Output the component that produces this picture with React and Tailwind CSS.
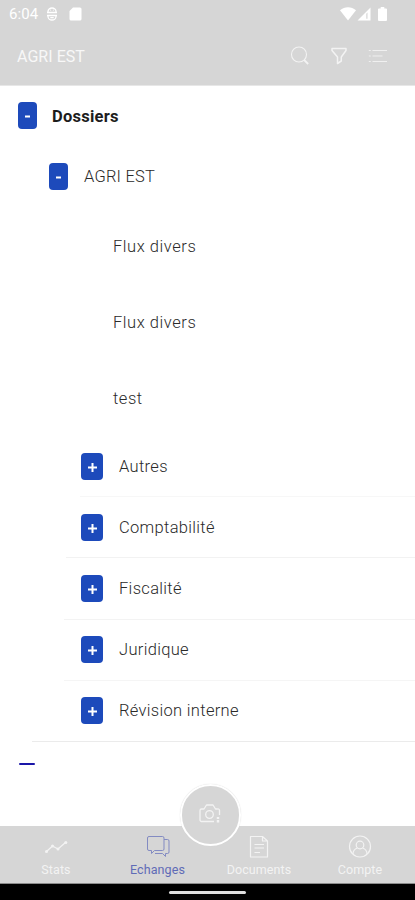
import React from "react";
import { clsx } from "clsx";

const leaves = ["Flux divers", "Flux divers", "test"];

const folders = [
  { name: "Autres", line: "ml-[80px] bg-[#f7f7f7]" },
  { name: "Comptabilité", line: "ml-[66px] bg-[#f2f2f2]" },
  { name: "Fiscalité", line: "ml-[64px] bg-[#f3f3f3]" },
  { name: "Juridique", line: "ml-[64px] bg-[#f5f5f5]" },
  { name: "Révision interne", line: "ml-[32px] bg-[#ebebeb]" },
];

function StatusBar() {
  return (
    <div className="flex h-7 items-center pl-[9px] pr-[28px] text-white">
      <span className="w-[30px] text-[15px] leading-none tracking-[0.1px]">6:04</span>
      <svg className="ml-[7px] h-[14px] w-[12px]" viewBox="0 0 12 14" fill="none" stroke="currentColor" strokeWidth="1.3">
        <path d="M2 5.5V4.5a4 3.5 0 0 1 8 0v1M2 8.5v1a4 3.5 0 0 0 8 0v-1M1 5.5h10M1 8.5h10" />
        <path d="M4.3 3.2h.8M6.9 3.2h.8M4.3 10.7h3.4" />
      </svg>
      <svg className="ml-[11px] h-[14px] w-[13px]" viewBox="0 0 13 14" fill="currentColor">
        <path d="M4 .5h7a1.5 1.5 0 0 1 1.5 1.5v10a1.5 1.5 0 0 1-1.5 1.5H2A1.5 1.5 0 0 1 .5 12V4z" />
      </svg>
      <svg className="ml-auto h-[14px] w-[16px]" viewBox="0 0 16 14" fill="currentColor">
        <path d="M0 3.2C4.7 -.9 11.3 -.9 16 3.2L8 13.5z" />
      </svg>
      <svg className="ml-[1px] h-[14px] w-[14px]" viewBox="0 0 14 14" fill="currentColor">
        <path fillRule="evenodd" d="M13.5 .5v13H.5zM9.3 6.8v5h1.2v-6.2z" />
      </svg>
      <svg className="ml-[7px] h-[14px] w-[9px]" viewBox="0 0 9 15" preserveAspectRatio="none" fill="currentColor">
        <path d="M2.7 0h3.6v1.5H8a1 1 0 0 1 1 1V14a1 1 0 0 1-1 1H1a1 1 0 0 1-1-1V2.5a1 1 0 0 1 1-1h1.7z" />
      </svg>
    </div>
  );
}

function Header() {
  return (
    <header className="h-[86px] shrink-0 border-b border-[#e7e7e7] bg-[#d6d6d6] text-white">
      <StatusBar />
      <div className="flex h-[56px] items-center pl-[17px] pr-[27px]">
        <h1 className="pt-px text-[16px] tracking-[0.05px] text-[#f8f8f8]">AGRI EST</h1>
        <div className="ml-auto flex items-center text-[#f3f3f3]">
          <svg className="h-5 w-5" viewBox="0 0 20 20" fill="none" stroke="currentColor" strokeWidth="1.1">
            <circle cx="9" cy="8.5" r="7.5" />
            <path d="m14.2 14 4 4" strokeWidth="1.8" />
          </svg>
          <svg className="ml-[21px] h-[18px] w-[16px]" viewBox="0 0 16 18" fill="none" stroke="currentColor" strokeWidth="1.5" strokeLinejoin="round">
            <path d="M1 1.5h14v2L10.300 10v4L6.500 16.500V10L1 3.500z" />
          </svg>
          <svg className="ml-[21px] h-4 w-[20px]" viewBox="0 0 20 16" fill="none" stroke="currentColor" strokeWidth="0.9">
            <path d="M4.5 2.500h14.500M4.500 8h10M4.500 13.500h14.500M.8 2.500h2M.8 8h2M.8 13.500h2" />
          </svg>
        </div>
      </div>
    </header>
  );
}

function Toggle({ open }) {
  return (
    <span
      className={clsx(
        "flex h-[27px] shrink-0 items-center justify-center rounded-[4px] bg-[#1d4abb] text-white",
        open ? "w-[19px]" : "w-[22px]"
      )}
    >
      <svg className="mt-0.5 h-[9px] w-[9px]" viewBox="0 0 9 9" fill="none" stroke="currentColor" strokeWidth="2">
        <path d={open ? "M2 4.5h5" : "M0 4.5h9M4.5 0v9"} />
      </svg>
    </span>
  );
}

function FolderTree() {
  return (
    <main className="flex min-h-0 flex-1 flex-col overflow-hidden text-[16.5px] text-[#2a2a2a]">
      <div className="flex h-[59px] shrink-0 items-center pl-[18px]">
        <Toggle open />
        <span className="ml-[15px] pt-[3px] font-bold tracking-[0.25px] text-[#1d1d1d]">Dossiers</span>
      </div>
      <div className="flex h-[63px] shrink-0 items-center pl-[49px]">
        <Toggle open />
        <span className="ml-[16px] pt-0.5 font-light tracking-[0.2px]">AGRI EST</span>
      </div>
      {leaves.map((leaf, i) => (
        <div key={i} className="flex h-[76px] shrink-0 items-center pl-[113px] pt-0.5 font-light tracking-[0.55px]">
          {leaf}
        </div>
      ))}
      {folders.map((folder) => (
        <div key={folder.name} className="flex h-[61.2px] shrink-0 flex-col">
          <div className="flex flex-1 items-center pl-[81px]">
            <Toggle />
            <span className="ml-[16px] pt-0.5 font-light tracking-[0.32px]">{folder.name}</span>
          </div>
          <div className={clsx("h-px", folder.line)} />
        </div>
      ))}
      <div className="ml-[19px] mt-[21px] h-0.5 w-[16px] shrink-0 rounded-full bg-[#1a16a8]" />
    </main>
  );
}

function StatsIcon() {
  return (
    <svg className="h-6 w-6" viewBox="0 0 24 24" fill="none" stroke="currentColor" strokeWidth="1.3">
      <path d="m2.5 17.500 6-5.500 5.500 3 7.500-6.500" />
      <g fill="currentColor" stroke="none">
        <circle cx="2.5" cy="17.5" r="1.5" />
        <circle cx="8.5" cy="12" r="1.5" />
        <circle cx="14" cy="15" r="1.5" />
        <circle cx="21.8" cy="8.5" r="1.5" />
      </g>
    </svg>
  );
}

function ChatIcon() {
  return (
    <svg className="h-6 w-6" viewBox="0 0 24 24" fill="none" stroke="currentColor" strokeWidth="1" strokeLinejoin="round">
      <path d="M3 2.500h13.500a1.500 1.500 0 0 1 1.500 1.500v11a1.500 1.500 0 0 1-1.500 1.500H8.500l-3 3v-3H3A1.500 1.500 0 0 1 1.500 15V4A1.500 1.500 0 0 1 3 2.500z" />
      <path d="M18 5.500h3.500A1.500 1.500 0 0 1 23 7v11a1.500 1.500 0 0 1-1.500 1.500h-2v3l-3-3h-7.500" />
    </svg>
  );
}

function DocumentIcon() {
  return (
    <svg className="h-6 w-6" viewBox="0 0 24 24" fill="none" stroke="currentColor" strokeWidth="1.2" strokeLinejoin="round">
      <path d="M4 2.500h11.500l5 4.500v16h-17V2.500zM15.500 2.500V7h5M7.500 10.500h9.500M7.500 14h9.500M7.500 18.500h5.500" />
    </svg>
  );
}

function AccountIcon() {
  return (
    <svg className="h-6 w-6" viewBox="0 0 24 24" fill="none" stroke="currentColor" strokeWidth="1.2">
      <circle cx="12" cy="12.5" r="10.5" />
      <circle cx="12" cy="11" r="3.8" />
      <path d="M5 20c0-3 1.500-5 4.500-6M19 20c0-3-1.500-5-4.500-6" />
    </svg>
  );
}

function Tab({ label, active, className, children }) {
  return (
    <div
      className={clsx(
        "flex flex-col items-center pt-[8px] text-[12.5px] leading-[15px]",
        active ? "text-[#838bc2]" : "text-[#f3f3f3]",
        className
      )}
    >
      {children}
      <span className={clsx("mt-[4px] tracking-[0.1px]", active && "text-[#5f6bb6]")}>{label}</span>
    </div>
  );
}

function BottomBar() {
  return (
    <nav className="relative flex h-[58px] shrink-0 border-b border-[#8b8b8b] bg-[#d6d6d6]">
      <Tab label="Stats" className="ml-[10px] w-[92px]">
        <StatsIcon />
      </Tab>
      <Tab label="Echanges" active className="w-[111px]">
        <ChatIcon />
      </Tab>
      <Tab label="Documents" className="w-[92px]">
        <DocumentIcon />
      </Tab>
      <Tab label="Compte" className="w-[110px]">
        <AccountIcon />
      </Tab>
      <button className="absolute -top-[42px] left-[180px] flex h-[62px] w-[61px] items-center justify-center rounded-full border-2 border-white bg-[#d6d6d6] text-[#f3f3f3] shadow-[0_0_1px_#d0d0d0]">
        <svg className="-ml-px -mt-1 h-[22px] w-[22px]" viewBox="0 0 22 22" fill="none" stroke="currentColor" strokeWidth="1.3" strokeLinejoin="round">
          <path d="M15 19.500H2.500A1.500 1.500 0 0 1 1 18V8.500A1.500 1.500 0 0 1 2.500 7H5l2.500-4h6.500L16.500 7h2A1.500 1.500 0 0 1 20.500 8.500V13" />
          <circle cx="10.5" cy="12.5" r="3.8" />
          <path d="M19 15v2M19 18v2.500" strokeWidth="2.4" />
        </svg>
      </button>
    </nav>
  );
}

export default function App() {
  return (
    <div className="flex h-[900px] w-[415px] flex-col overflow-hidden bg-white font-['Roboto',sans-serif]">
      <Header />
      <FolderTree />
      <BottomBar />
      <div className="flex h-[16px] shrink-0 justify-center bg-black pt-[7px]">
        <div className="h-[3px] w-[77px] rounded-full bg-[#dedede]" />
      </div>
    </div>
  );
}
